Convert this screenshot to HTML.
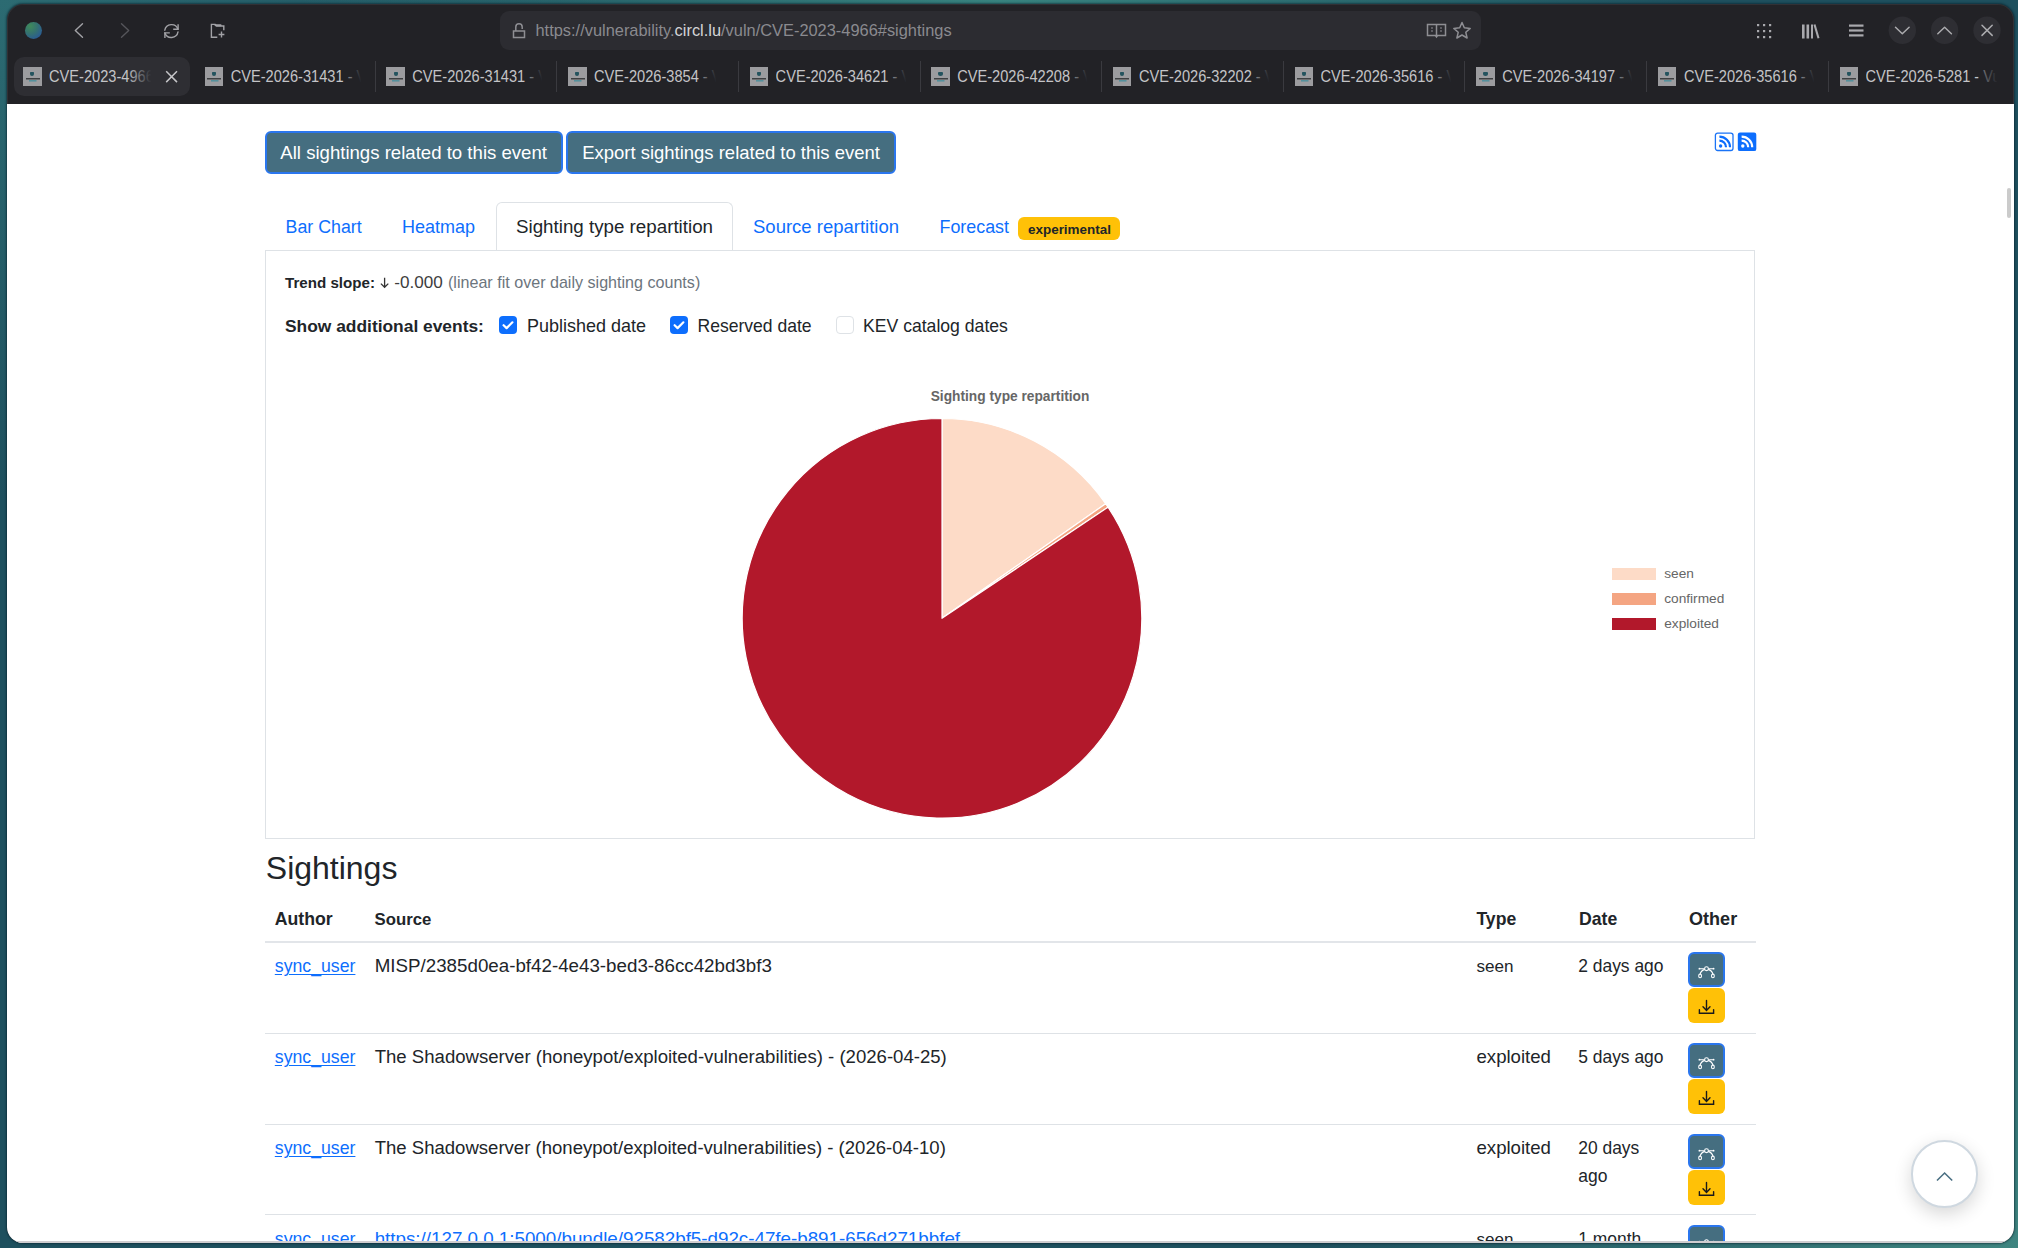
<!DOCTYPE html>
<html><head><meta charset="utf-8">
<style>
*{box-sizing:border-box;margin:0;padding:0}
html,body{width:2018px;height:1248px;overflow:hidden}
body{position:relative;font-family:"Liberation Sans",sans-serif;background:radial-gradient(ellipse 700px 260px at 1000px 0px,#38837f 0%,rgba(56,131,127,0) 100%),radial-gradient(ellipse 700px 500px at 2018px 1248px,#3f8580 0%,rgba(63,133,128,0) 100%),radial-gradient(ellipse 600px 500px at 0px 0px,#2c6b72 0%,rgba(44,107,114,0) 100%),#1e505e}
.abs{position:absolute;white-space:nowrap;line-height:1}
#win{position:absolute;left:7px;top:4px;width:2007px;height:1239px;border-radius:16px;overflow:hidden;background:#222226;box-shadow:0 0 2px 1px rgba(5,30,40,0.55),inset 0 0 0 1px rgba(255,255,255,0.07)}
#chrome{position:absolute;left:-7px;top:-4px;width:2018px;height:104px}
#page{position:absolute;left:0;top:99.5px;width:2007px;height:1139.5px;background:#fff;overflow:hidden;border-bottom:2px solid #cfcdd0}
#pin{position:absolute;left:-7px;top:-103.5px;width:2018px;height:1248px}
.t{position:absolute;white-space:nowrap;line-height:1;color:#212529}
.tabt{position:absolute;white-space:nowrap;line-height:1;color:#c4c4c7;font-size:15px;transform:scaleY(1.17);transform-origin:0 79%}
.fav{position:absolute;width:18.5px;height:18.5px;background:#9c9c9f}
.fav:before{content:"";position:absolute;left:7.3px;top:5px;width:4.2px;height:3.8px;background:#24535e;border-radius:1px 1px 2.5px 2.5px}
.fav:after{content:"";position:absolute;left:2.5px;top:10.6px;width:14px;height:4px;background:linear-gradient(#3e4042,#3e4042) 0 0/14px 1.5px no-repeat,linear-gradient(#55909c,#55909c) 3.5px 2px/7.5px 1.6px no-repeat}
.sep{position:absolute;top:61px;width:1px;height:31px;background:#3a3a3f}
.fade{position:absolute;top:62px;height:30px;width:40px;background:linear-gradient(90deg,rgba(34,34,38,0.35),#222226 75%)}
a{color:#0d6efd}
</style></head><body>
<div id="win">
 <div id="chrome">
  <!-- globe -->
  <div style="position:absolute;left:24.5px;top:21.5px;width:17.5px;height:17.5px;border-radius:50%;background:radial-gradient(circle at 30% 25%,#3f8a5a 0%,#35736f 40%,#2b5e8f 75%,#234f86 100%)"></div>
  <svg class="abs" style="left:0;top:0" width="2018" height="52" viewBox="0 0 2018 52">
   <g fill="none" stroke="#a2a2a6" stroke-width="1.4" stroke-linecap="round" stroke-linejoin="round">
    <polyline points="82.5,23.8 75.3,30.5 82.5,37.2"/>
    <polyline points="121.5,23.8 128.7,30.5 121.5,37.2" stroke="#55555a"/>
    <!-- reload -->
    <path d="M164.8,30.2 A6.8,6.8 0 0 1 177.9,29.2"/>
    <polyline points="173.2,29.2 178.1,29.2 178.1,24.2" stroke-linecap="butt" stroke-linejoin="miter"/>
    <path d="M178,31.9 A6.8,6.8 0 0 1 164.9,32.9"/>
    <polyline points="169.8,32.9 164.9,32.9 164.9,37.9" stroke-linecap="butt" stroke-linejoin="miter"/>
    <!-- new tab folder -->
    <path d="M217.3,37.2 H211.4 V24.4 H215.2 L216.6,26 H223.8 V30.2" stroke-linejoin="miter" stroke-linecap="butt"/>
    <path d="M215.5,25.2 H220.6" stroke-width="2"/>
    <path d="M221.5,31.6 V37.4 M218.6,34.5 H224.4" stroke-linecap="butt"/>
   </g>
  </svg>
  <!-- URL bar -->
  <div style="position:absolute;left:500px;top:11px;width:981px;height:39px;border-radius:9px;background:#2c2c31"></div>
  <svg class="abs" style="left:0;top:0" width="2018" height="52" viewBox="0 0 2018 52">
   <g fill="none" stroke="#8e8e93" stroke-width="1.5">
    <rect x="513.5" y="31" width="11" height="6.5"/>
    <path d="M515.8,31 V27 A3.2,3.2 0 0 1 522.2,27 V29"/>
    <!-- book -->
    <path d="M1427.5,24.5 H1445.5 V35.5 H1437.5 L1436.5,37 L1435.5,35.5 H1427.5 Z M1436.5,24.5 V35.5"/>
    <path d="M1431,28 h2 M1431,31 h2 M1440,28 h2 M1440,31 h2" stroke-width="1.2"/>
    <!-- star -->
    <path d="M1462,22.5 L1464.3,27.8 L1470.2,28.4 L1465.8,32.3 L1467.1,38 L1462,35 L1456.9,38 L1458.2,32.3 L1453.8,28.4 L1459.7,27.8 Z" stroke-linejoin="round"/>
   </g>
   <g fill="#a9a9ad">
    <!-- grid dots -->
    <rect x="1757" y="24" width="2.2" height="2.2"/><rect x="1763" y="24" width="2.2" height="2.2"/><rect x="1769" y="24" width="2.2" height="2.2"/>
    <rect x="1757" y="30" width="2.2" height="2.2"/><rect x="1763" y="30" width="2.2" height="2.2"/><rect x="1769" y="30" width="2.2" height="2.2"/>
    <rect x="1757" y="36" width="2.2" height="2.2"/><rect x="1763" y="36" width="2.2" height="2.2"/><rect x="1769" y="36" width="2.2" height="2.2"/>
    <!-- library -->
    <rect x="1802" y="24.5" width="2.6" height="14"/><rect x="1806.5" y="24.5" width="2.6" height="14"/><rect x="1811" y="24.5" width="2" height="14"/>
    <path d="M1813.5,24.8 L1815.5,24.2 L1819.5,38 L1817.5,38.6 Z"/>
    <!-- hamburger -->
    <rect x="1849" y="24.5" width="14.5" height="2.2"/><rect x="1849" y="29.4" width="14.5" height="2.2"/><rect x="1849" y="34.3" width="14.5" height="2.2"/>
   </g>
   <circle cx="1902.3" cy="30.3" r="13.7" fill="#2e2e33"/>
   <circle cx="1944.6" cy="30.3" r="13.7" fill="#2e2e33"/>
   <circle cx="1987" cy="30.3" r="13.7" fill="#2e2e33"/>
   <g fill="none" stroke="#ababae" stroke-width="1.5" stroke-linecap="round" stroke-linejoin="round">
    <polyline points="1895.5,27.3 1902.3,33.8 1909.1,27.3"/>
    <polyline points="1937.8,33.8 1944.6,27.3 1951.4,33.8"/>
    <path d="M1982,25.2 L1992.2,35.4 M1992.2,25.2 L1982,35.4"/>
   </g>
  </svg>
  <div class="abs" style="left:535.5px;top:22.3px;font-size:16.4px;color:#8a8a8f">https://vulnerability.<span style="color:#d4d4d7">circl.lu</span>/vuln/CVE-2023-4966#sightings</div>

  <div style="position:absolute;left:14px;top:57px;width:176px;height:39px;border-radius:10px;background:#2e2e33"></div>
<div class="tabt" style="left:49.0px;top:70.0px;font-size:14.62px;width:104px;overflow:hidden">CVE-2023-4966 - Vulnerability-Lookup</div>
<div class="fade" style="left:127.0px;width:27px;background:linear-gradient(90deg,rgba(46,46,51,0),#2e2e33 90%)"></div>
<svg class="abs" style="left:0;top:0" width="200" height="100"><path d="M166.2,71.3 L177,82.1 M177,71.3 L166.2,82.1" stroke="#c4c4c7" stroke-width="1.5" fill="none"/></svg>
<div class="fav" style="left:23.0px;top:67px"></div>
<div class="tabt" style="left:230.7px;top:70.0px;font-size:14.62px;width:135.0px;overflow:hidden">CVE-2026-31431 - Vulnerability-Lookup</div>
<div class="fade" style="left:346.6px;width:19.0px"></div>
<div class="fav" style="left:204.7px;top:67px"></div>
<div class="tabt" style="left:412.3px;top:70.0px;font-size:14.62px;width:135.0px;overflow:hidden">CVE-2026-31431 - Vulnerability-Lookup</div>
<div class="fade" style="left:528.3px;width:19.0px"></div>
<div class="fav" style="left:386.3px;top:67px"></div>
<div class="sep" style="left:374.5px"></div>
<div class="tabt" style="left:594.0px;top:70.0px;font-size:14.62px;width:126.9px;overflow:hidden">CVE-2026-3854 - Vulnerability-Lookup</div>
<div class="fade" style="left:701.8px;width:19.0px"></div>
<div class="fav" style="left:568.0px;top:67px"></div>
<div class="sep" style="left:556.1px"></div>
<div class="tabt" style="left:775.6px;top:70.0px;font-size:14.62px;width:135.0px;overflow:hidden">CVE-2026-34621 - Vulnerability-Lookup</div>
<div class="fade" style="left:891.6px;width:19.0px"></div>
<div class="fav" style="left:749.6px;top:67px"></div>
<div class="sep" style="left:737.8px"></div>
<div class="tabt" style="left:957.2px;top:70.0px;font-size:14.62px;width:135.0px;overflow:hidden">CVE-2026-42208 - Vulnerability-Lookup</div>
<div class="fade" style="left:1073.2px;width:19.0px"></div>
<div class="fav" style="left:931.2px;top:67px"></div>
<div class="sep" style="left:919.5px"></div>
<div class="tabt" style="left:1138.9px;top:70.0px;font-size:14.62px;width:135.0px;overflow:hidden">CVE-2026-32202 - Vulnerability-Lookup</div>
<div class="fade" style="left:1254.9px;width:19.0px"></div>
<div class="fav" style="left:1112.9px;top:67px"></div>
<div class="sep" style="left:1101.1px"></div>
<div class="tabt" style="left:1320.5px;top:70.0px;font-size:14.62px;width:135.0px;overflow:hidden">CVE-2026-35616 - Vulnerability-Lookup</div>
<div class="fade" style="left:1436.5px;width:19.0px"></div>
<div class="fav" style="left:1294.5px;top:67px"></div>
<div class="sep" style="left:1282.8px"></div>
<div class="tabt" style="left:1502.2px;top:70.0px;font-size:14.62px;width:135.0px;overflow:hidden">CVE-2026-34197 - Vulnerability-Lookup</div>
<div class="fade" style="left:1618.2px;width:19.0px"></div>
<div class="fav" style="left:1476.2px;top:67px"></div>
<div class="sep" style="left:1464.4px"></div>
<div class="tabt" style="left:1683.9px;top:70.0px;font-size:14.62px;width:135.0px;overflow:hidden">CVE-2026-35616 - Vulnerability-Lookup</div>
<div class="fade" style="left:1799.9px;width:19.0px"></div>
<div class="fav" style="left:1657.9px;top:67px"></div>
<div class="sep" style="left:1646.0px"></div>
<div class="tabt" style="left:1865.5px;top:70.0px;font-size:14.62px;width:138.9px;overflow:hidden">CVE-2026-5281 - Vulnerability-Lookup</div>
<div class="fade" style="left:1978.4px;width:26.0px"></div>
<div class="fav" style="left:1839.5px;top:67px"></div>
<div class="sep" style="left:1827.7px"></div>
 </div>
 <div id="page"><div id="pin">
<div style="position:absolute;left:265px;top:130.7px;width:298px;height:43.3px;border:2px solid #2a76ee;border-radius:6px;background:#456e80"></div>
<div style="position:absolute;left:566px;top:130.7px;width:330px;height:43.3px;border:2px solid #2a76ee;border-radius:6px;background:#456e80"></div>
<div class="t" style="left:280.3px;top:144.00px;font-size:18.60px;color:#fff;">All sightings related to this event</div>
<div class="t" style="left:582.2px;top:144.00px;font-size:18.48px;color:#fff;">Export sightings related to this event</div>
<svg class="abs" style="left:1714px;top:132px" width="44" height="20" viewBox="0 0 44 20">
 <rect x="1.4" y="1.1" width="17.6" height="17.4" rx="2.2" fill="#fff" stroke="#1a73f6" stroke-width="1.3"/>
 <rect x="23.8" y="0.6" width="18.5" height="18.5" rx="2.2" fill="#0d6efd"/>
 <g fill="none" stroke="#0d6efd" stroke-width="2.2"><path d="M5.4,8.6 A6.6,6.6 0 0 1 12,15.2"/><path d="M5.4,4.6 A10.6,10.6 0 0 1 16,15.2"/></g><circle cx="6.6" cy="14" r="1.7" fill="#0d6efd"/>
 <g fill="none" stroke="#fff" stroke-width="2.2"><path d="M27.6,8.6 A6.6,6.6 0 0 1 34.2,15.2"/><path d="M27.6,4.6 A10.6,10.6 0 0 1 38.2,15.2"/></g><circle cx="28.8" cy="14" r="1.7" fill="#fff"/>
</svg>
<div style="position:absolute;left:496px;top:202px;width:237px;height:49px;border:1px solid #dee2e6;border-bottom:none;border-radius:6px 6px 0 0;background:#fff"></div>
<div style="position:absolute;left:265px;top:250px;width:1490px;height:1px;background:#dee2e6"></div>
<div class="t" style="left:285.6px;top:219.00px;font-size:17.78px;color:#0d6efd;">Bar Chart</div>
<div class="t" style="left:402px;top:218.00px;font-size:17.99px;color:#0d6efd;">Heatmap</div>
<div class="t" style="left:516px;top:218.00px;font-size:18.75px;color:#212529;">Sighting type repartition</div>
<div class="t" style="left:753px;top:218.00px;font-size:18.50px;color:#0d6efd;">Source repartition</div>
<div class="t" style="left:939.5px;top:219.00px;font-size:17.87px;color:#0d6efd;">Forecast</div>
<div style="position:absolute;left:1018px;top:217px;width:102px;height:23.2px;border-radius:6px;background:#ffc107"></div>
<div class="t" style="left:1028px;top:223.00px;font-size:13.45px;color:#212529;font-weight:bold;">experimental</div>
<div style="position:absolute;left:265px;top:250px;width:1490px;height:589px;border:1px solid #dee2e6;border-top:none"></div>
<div class="t" style="left:285px;top:275.00px;font-size:15.14px;color:#212529;font-weight:bold;">Trend slope:</div>
<svg class="abs" style="left:378px;top:274px" width="14" height="16"><path d="M6.6,3.8 V13.2 M2.9,9.6 L6.6,13.3 L10.3,9.6" fill="none" stroke="#333" stroke-width="1.3"/></svg>
<div class="t" style="left:394.3px;top:274.00px;font-size:17.11px;color:#3d3d3d;">-0.000</div>
<div class="t" style="left:448px;top:274.00px;font-size:16.10px;color:#6c757d;">(linear fit over daily sighting counts)</div>
<div class="t" style="left:285px;top:318.00px;font-size:17.39px;color:#212529;font-weight:bold;">Show additional events:</div>
<div style="position:absolute;left:499px;top:316px;width:18px;height:18px;border-radius:4px;background:#0d6efd"></div>
<svg class="abs" style="left:499px;top:316px" width="18" height="18"><polyline points="4.6,9.2 7.6,12.1 13.4,6.3" fill="none" stroke="#fff" stroke-width="2.2" stroke-linecap="round" stroke-linejoin="round"/></svg>
<div style="position:absolute;left:670px;top:316px;width:18px;height:18px;border-radius:4px;background:#0d6efd"></div>
<svg class="abs" style="left:670px;top:316px" width="18" height="18"><polyline points="4.6,9.2 7.6,12.1 13.4,6.3" fill="none" stroke="#fff" stroke-width="2.2" stroke-linecap="round" stroke-linejoin="round"/></svg>
<div style="position:absolute;left:835.5px;top:316px;width:18px;height:18px;border-radius:4px;border:1px solid #dee2e6;background:#fff"></div>
<div class="t" style="left:527px;top:317.00px;font-size:17.99px;color:#212529;">Published date</div>
<div class="t" style="left:697.5px;top:318.00px;font-size:17.56px;color:#212529;">Reserved date</div>
<div class="t" style="left:863px;top:318.00px;font-size:17.62px;color:#212529;">KEV catalog dates</div>
<div class="t" style="left:930.7px;top:390.00px;font-size:13.74px;color:#666;font-weight:bold;">Sighting type repartition</div>
<svg class="abs" style="left:700px;top:400px" width="500" height="440" viewBox="700 400 500 440"><path d="M942,618.3 L942.00,418.50 A199.8,199.8 0 0 1 1105.67,503.70 Z" fill="#fddbc7" stroke="#fff" stroke-width="1.2" stroke-linejoin="round"/><path d="M942,618.3 L1105.67,503.70 A199.8,199.8 0 0 1 1108.03,507.15 Z" fill="#f4a582" stroke="#fff" stroke-width="1.2" stroke-linejoin="round"/><path d="M942,618.3 L1108.03,507.15 A199.8,199.8 0 1 1 942.00,418.50 Z" fill="#b2182b" stroke="#fff" stroke-width="1.2" stroke-linejoin="round"/></svg>
<div style="position:absolute;left:1611.7px;top:568px;width:44.6px;height:12px;background:#fddbc7"></div>
<div class="t" style="left:1664.2px;top:567.00px;font-size:13.70px;color:#666;">seen</div>
<div style="position:absolute;left:1611.7px;top:593px;width:44.6px;height:12px;background:#f4a582"></div>
<div class="t" style="left:1664.2px;top:592.00px;font-size:13.70px;color:#666;">confirmed</div>
<div style="position:absolute;left:1611.7px;top:618px;width:44.6px;height:12px;background:#b2182b"></div>
<div class="t" style="left:1664.2px;top:617.00px;font-size:13.70px;color:#666;">exploited</div>
<div class="t" style="left:265.8px;top:852.00px;font-size:31.99px;color:#212529;">Sightings</div>
<div class="t" style="left:274.7px;top:911.00px;font-size:17.70px;color:#212529;font-weight:bold;">Author</div>
<div class="t" style="left:374.6px;top:912.00px;font-size:16.73px;color:#212529;font-weight:bold;">Source</div>
<div class="t" style="left:1476.4px;top:911.00px;font-size:17.61px;color:#212529;font-weight:bold;">Type</div>
<div class="t" style="left:1579px;top:911.00px;font-size:17.67px;color:#212529;font-weight:bold;">Date</div>
<div class="t" style="left:1689px;top:910.00px;font-size:18.07px;color:#212529;font-weight:bold;">Other</div>
<div style="position:absolute;left:265px;top:941px;width:1491px;height:1.6px;background:#e2e5e9"></div>
<div style="position:absolute;left:265px;top:1032.5px;width:1491px;height:1px;background:#dee2e6"></div>
<div style="position:absolute;left:265px;top:1123.5px;width:1491px;height:1px;background:#dee2e6"></div>
<div style="position:absolute;left:265px;top:1214px;width:1491px;height:1px;background:#dee2e6"></div>
<div class="t" style="left:274.8px;top:958.00px;font-size:17.71px;color:#0d6efd;text-decoration:underline;text-underline-offset:2px">sync_user</div>
<div class="t" style="left:374.7px;top:957.00px;font-size:18.76px;color:#212529;">MISP/2385d0ea-bf42-4e43-bed3-86cc42bd3bf3</div>
<div class="t" style="left:1476.5px;top:958.00px;font-size:17.10px;color:#212529;">seen</div>
<div class="t" style="left:1578.2px;top:958.00px;font-size:17.45px;color:#212529;">2 days ago</div>
<div style="position:absolute;left:1688.2px;top:951.6px;width:37px;height:35.5px;border:2px solid #2a76ee;border-radius:6px;background:#456e80"></div>
<div style="position:absolute;left:1688.2px;top:987.6px;width:37px;height:35.6px;border-radius:6px;background:#ffc107"></div>
<svg class="abs" style="left:1688.2px;top:951.6px" width="37" height="36" viewBox="0 0 37 36"><g fill="none" stroke="#fff" stroke-width="1.1"><path d="M11.6,16.7 H16.4 M20.6,16.7 H25.4"/><circle cx="18.5" cy="16.7" r="1.9"/><path d="M16.8,17.4 Q12.8,18.6 12.1,22.2 M20.2,17.4 Q24.2,18.6 24.9,22.2"/><ellipse cx="12.1" cy="23.9" rx="1.4" ry="1.8"/><ellipse cx="24.9" cy="23.9" rx="1.4" ry="1.8"/></g><circle cx="11.4" cy="16.7" r="0.9" fill="#fff"/><circle cx="25.6" cy="16.7" r="0.9" fill="#fff"/></svg>
<svg class="abs" style="left:1688.2px;top:987.6px" width="37" height="36" viewBox="0 0 37 36"><g fill="none" stroke="#1a1a1a" stroke-width="1.4" stroke-linecap="round"><path d="M18.5,12.5 V22.3 M15,18.8 L18.5,22.4 L22,18.8"/><path d="M11.4,21.6 V25.2 H25.6 V21.6"/></g></svg>
<div class="t" style="left:274.8px;top:1049.00px;font-size:17.71px;color:#0d6efd;text-decoration:underline;text-underline-offset:2px">sync_user</div>
<div class="t" style="left:374.7px;top:1048.00px;font-size:18.58px;color:#212529;">The Shadowserver (honeypot/exploited-vulnerabilities) - (2026-04-25)</div>
<div class="t" style="left:1476.5px;top:1048.00px;font-size:18.60px;color:#212529;">exploited</div>
<div class="t" style="left:1578.2px;top:1049.00px;font-size:17.45px;color:#212529;">5 days ago</div>
<div style="position:absolute;left:1688.2px;top:1042.7px;width:37px;height:35.5px;border:2px solid #2a76ee;border-radius:6px;background:#456e80"></div>
<div style="position:absolute;left:1688.2px;top:1078.7px;width:37px;height:35.6px;border-radius:6px;background:#ffc107"></div>
<svg class="abs" style="left:1688.2px;top:1042.7px" width="37" height="36" viewBox="0 0 37 36"><g fill="none" stroke="#fff" stroke-width="1.1"><path d="M11.6,16.7 H16.4 M20.6,16.7 H25.4"/><circle cx="18.5" cy="16.7" r="1.9"/><path d="M16.8,17.4 Q12.8,18.6 12.1,22.2 M20.2,17.4 Q24.2,18.6 24.9,22.2"/><ellipse cx="12.1" cy="23.9" rx="1.4" ry="1.8"/><ellipse cx="24.9" cy="23.9" rx="1.4" ry="1.8"/></g><circle cx="11.4" cy="16.7" r="0.9" fill="#fff"/><circle cx="25.6" cy="16.7" r="0.9" fill="#fff"/></svg>
<svg class="abs" style="left:1688.2px;top:1078.7px" width="37" height="36" viewBox="0 0 37 36"><g fill="none" stroke="#1a1a1a" stroke-width="1.4" stroke-linecap="round"><path d="M18.5,12.5 V22.3 M15,18.8 L18.5,22.4 L22,18.8"/><path d="M11.4,21.6 V25.2 H25.6 V21.6"/></g></svg>
<div class="t" style="left:274.8px;top:1140.00px;font-size:17.71px;color:#0d6efd;text-decoration:underline;text-underline-offset:2px">sync_user</div>
<div class="t" style="left:374.7px;top:1139.00px;font-size:18.56px;color:#212529;">The Shadowserver (honeypot/exploited-vulnerabilities) - (2026-04-10)</div>
<div class="t" style="left:1476.5px;top:1139.00px;font-size:18.60px;color:#212529;">exploited</div>
<div class="t" style="left:1578.2px;top:1140.00px;font-size:17.45px;color:#212529;">20 days</div>
<div class="t" style="left:1578.2px;top:1168.00px;font-size:17.50px;color:#212529;">ago</div>
<div style="position:absolute;left:1688.2px;top:1133.8px;width:37px;height:35.5px;border:2px solid #2a76ee;border-radius:6px;background:#456e80"></div>
<div style="position:absolute;left:1688.2px;top:1169.8px;width:37px;height:35.6px;border-radius:6px;background:#ffc107"></div>
<svg class="abs" style="left:1688.2px;top:1133.8px" width="37" height="36" viewBox="0 0 37 36"><g fill="none" stroke="#fff" stroke-width="1.1"><path d="M11.6,16.7 H16.4 M20.6,16.7 H25.4"/><circle cx="18.5" cy="16.7" r="1.9"/><path d="M16.8,17.4 Q12.8,18.6 12.1,22.2 M20.2,17.4 Q24.2,18.6 24.9,22.2"/><ellipse cx="12.1" cy="23.9" rx="1.4" ry="1.8"/><ellipse cx="24.9" cy="23.9" rx="1.4" ry="1.8"/></g><circle cx="11.4" cy="16.7" r="0.9" fill="#fff"/><circle cx="25.6" cy="16.7" r="0.9" fill="#fff"/></svg>
<svg class="abs" style="left:1688.2px;top:1169.8px" width="37" height="36" viewBox="0 0 37 36"><g fill="none" stroke="#1a1a1a" stroke-width="1.4" stroke-linecap="round"><path d="M18.5,12.5 V22.3 M15,18.8 L18.5,22.4 L22,18.8"/><path d="M11.4,21.6 V25.2 H25.6 V21.6"/></g></svg>
<div class="t" style="left:274.8px;top:1231.00px;font-size:17.71px;color:#0d6efd;text-decoration:underline;text-underline-offset:2px">sync_user</div>
<div class="t" style="left:374.7px;top:1230.00px;font-size:18.77px;color:#0d6efd;text-decoration:underline;text-underline-offset:2px">https://127.0.0.1:5000/bundle/92582bf5-d92c-47fe-b891-656d271bbfef</div>
<div class="t" style="left:1476.5px;top:1231.00px;font-size:17.10px;color:#212529;">seen</div>
<div class="t" style="left:1578.2px;top:1231.00px;font-size:17.45px;color:#212529;">1 month</div>
<div style="position:absolute;left:1688.2px;top:1224.9px;width:37px;height:35.5px;border:2px solid #2a76ee;border-radius:6px;background:#456e80"></div>
<div style="position:absolute;left:1688.2px;top:1260.9px;width:37px;height:35.6px;border-radius:6px;background:#ffc107"></div>
<svg class="abs" style="left:1688.2px;top:1224.9px" width="37" height="36" viewBox="0 0 37 36"><g fill="none" stroke="#fff" stroke-width="1.1"><path d="M11.6,16.7 H16.4 M20.6,16.7 H25.4"/><circle cx="18.5" cy="16.7" r="1.9"/><path d="M16.8,17.4 Q12.8,18.6 12.1,22.2 M20.2,17.4 Q24.2,18.6 24.9,22.2"/><ellipse cx="12.1" cy="23.9" rx="1.4" ry="1.8"/><ellipse cx="24.9" cy="23.9" rx="1.4" ry="1.8"/></g><circle cx="11.4" cy="16.7" r="0.9" fill="#fff"/><circle cx="25.6" cy="16.7" r="0.9" fill="#fff"/></svg>
<svg class="abs" style="left:1688.2px;top:1260.9px" width="37" height="36" viewBox="0 0 37 36"><g fill="none" stroke="#1a1a1a" stroke-width="1.4" stroke-linecap="round"><path d="M18.5,12.5 V22.3 M15,18.8 L18.5,22.4 L22,18.8"/><path d="M11.4,21.6 V25.2 H25.6 V21.6"/></g></svg>
<div style="position:absolute;left:2006.6px;top:188px;width:4.2px;height:30px;border-radius:2px;background:#cbcbcb"></div>
<div style="position:absolute;left:1910.8px;top:1140px;width:67.6px;height:67.6px;border-radius:50%;background:#fff;border:2px solid #cfd8e0;box-shadow:0 6px 18px rgba(0,0,0,0.16)"></div>
<svg class="abs" style="left:1930px;top:1165px" width="30" height="20"><polyline points="7,15.5 14.6,8 22.2,15.5" fill="none" stroke="#4a6f82" stroke-width="1.6"/></svg>
 </div></div>
</div>
</body></html>
